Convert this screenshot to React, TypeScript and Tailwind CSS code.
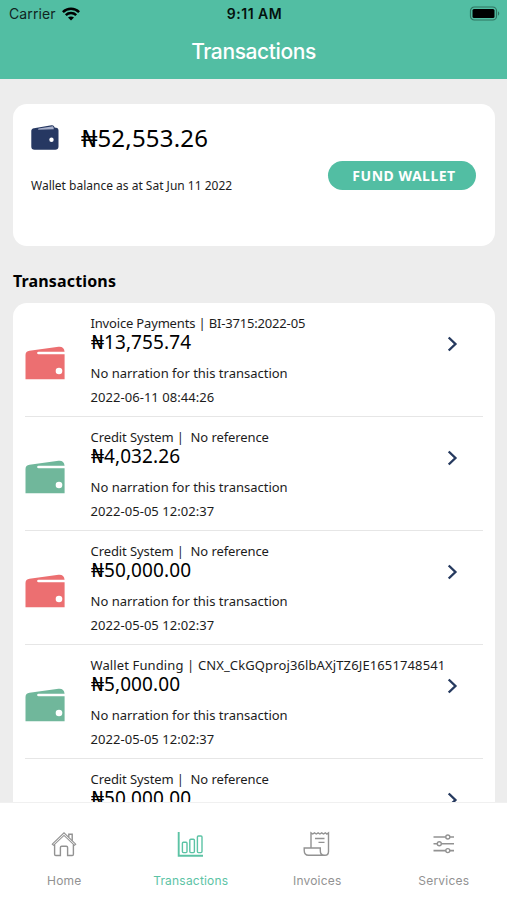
import type { ReactNode } from 'react';

type Transaction = {
  title: string;
  titleClass: string;
  amount: string;
  date: string;
  color: string;
};

const transactions: Transaction[] = [
  { title: 'Invoice Payments | BI-3715:2022-05', titleClass: 'tracking-[-0.17px]', amount: '13,755.74', date: '2022-06-11 08:44:26', color: '#ec6f71' },
  { title: 'Credit System |  No reference', titleClass: 'tracking-[-0.09px]', amount: '4,032.26', date: '2022-05-05 12:02:37', color: '#70b79b' },
  { title: 'Credit System |  No reference', titleClass: 'tracking-[-0.09px]', amount: '50,000.00', date: '2022-05-05 12:02:37', color: '#ec6f71' },
  { title: 'Wallet Funding | CNX_CkGQproj36lbAXjTZ6JE1651748541', titleClass: 'tracking-[0.12px]', amount: '5,000.00', date: '2022-05-05 12:02:37', color: '#70b79b' },
  { title: 'Credit System |  No reference', titleClass: 'tracking-[-0.09px]', amount: '50,000.00', date: '2022-05-05 12:02:37', color: '#ec6f71' },
];

function StatusBar() {
  return (
    <div className="grid h-[27px] grid-cols-3 items-center pr-[7px] pl-[9px] text-black">
      <div className="flex items-center gap-1.5">
        <span className="text-[14px] tracking-[0.1px] text-[#10251f]">Carrier</span>
        <svg width="18" height="14" viewBox="0 0 18 14" fill="none" stroke="#000" strokeWidth="2.5">
          <path d="M0.9 5.2C5.4 0.7 12.6 0.7 17.1 5.2" />
          <path d="M3.8 8.2C6.7 5.4 11.3 5.4 14.2 8.2" />
          <path d="M9 13.6L6 10.5C7.7 9 10.3 9 12 10.5Z" fill="#000" stroke="none" />
        </svg>
      </div>
      <span className="text-center text-[14px] font-semibold tracking-[0.5px] text-[#04120e]">9:11 AM</span>
      <svg className="ml-auto" width="31" height="15" viewBox="0 0 31 15">
        <rect x="1.5" y="1" width="26" height="13" rx="3.8" fill="none" stroke="#2f7461" strokeWidth="1.2" />
        <rect x="3.5" y="3" width="22" height="9" rx="1.5" fill="#000" />
        <path d="M29 5.3C30.7 6 30.7 9 29 9.7Z" fill="#2f7461" />
      </svg>
    </div>
  );
}

// The currency sign is set wider than the digits beside it
function Naira() {
  return <span className="mr-[2.5px] inline-block origin-left scale-x-[1.2] leading-none">₦</span>;
}

function BalanceIcon() {
  return (
    <svg width="28" height="26" viewBox="0 0 28 26">
      <path d="M3 3.2L20.5 0.3C22.3 0 23.4 1 23.6 2.6L25 2.8C26.6 3 27.5 4 27.5 5.5V21.5C27.5 23.6 26.3 24.8 24.2 24.8H3.6C1.4 24.8 0.3 23.6 0.3 21.5V5.8C0.3 4.4 1.3 3.5 3 3.2Z" fill="#263862" />
      <path d="M7.5 3.4L20.6 1.4C21.8 1.2 22.5 1.8 22.6 2.8L22.8 4.3L7 4.7Z" fill="#a9b1cb" />
      <circle cx="20.5" cy="14.8" r="2.2" fill="#fff" />
    </svg>
  );
}

function WalletIcon({ color }: { color: string }) {
  return (
    <svg className="shrink-0" width="40" height="34" viewBox="0 0 40 34">
      <path d="M0.5 33.3V9C0.5 6.4 2 5.2 4.5 4.8L33.5 0.7C37 0.3 39.2 1.8 39.6 5.8H13.4C11.6 5.8 11.6 8.2 13.4 8.2H39.6V33.3Z" fill={color} />
      <circle cx="34" cy="25" r="3.3" fill="#fff" />
    </svg>
  );
}

function Chevron() {
  return (
    <svg width="12" height="16" viewBox="0 0 12 16" fill="none" stroke="#263a5f" strokeWidth="2.4">
      <path d="M1.7 1.5L8.4 8L1.7 14.5" />
    </svg>
  );
}

function TransactionRow({ item }: { item: Transaction }) {
  return (
    <li className="flex h-[114px] shrink-0 border-b border-[#e6e6e6]">
      <div className="w-[65.5px] shrink-0 pt-[43px]">
        <WalletIcon color={item.color} />
      </div>
      <div className="w-[356.5px] shrink-0 pt-[11px] text-[13px] leading-[18px] whitespace-pre text-[#1c1c1c]">
        <p className={item.titleClass}>{item.title}</p>
        <p className="h-5 text-[19px] leading-5 tracking-[0.1px] text-black"><Naira />{item.amount}</p>
        <p className="mt-3">No narration for this transaction</p>
        <p className="mt-1.5 tracking-[0.05px]">{item.date}</p>
      </div>
      <div className="pt-[33px]">
        <Chevron />
      </div>
    </li>
  );
}

function Tab({ label, active, children }: { label: string; active?: boolean; children: ReactNode }) {
  return (
    <div className={`flex flex-col items-center pt-[27px] ${active ? 'text-[#5cc3a5]' : 'text-[#929292]'}`}>
      <svg width="28" height="28" viewBox="0 0 28 28" fill="none" stroke="currentColor" strokeWidth="1.4">
        {children}
      </svg>
      <span className="mt-[15px] text-[12px] leading-4 tracking-[0.2px]">{label}</span>
    </div>
  );
}

function TabBar() {
  return (
    <nav className="grid h-[98px] shrink-0 grid-cols-4 border-t border-[#f0f0f0] bg-white pl-px font-['Inter',sans-serif]">
      <Tab label="Home">
        <path d="M2.3 14.2L14 2.8L25.7 14.2L24.5 15.3L14 5.4L3.5 15.3Z" strokeWidth="1.1" />
        <path d="M4.6 14.6V24.3C4.6 25 5.1 25.5 5.8 25.5H10.4V17.6C10.4 16.8 10.9 16.3 11.7 16.3H16.3C17.1 16.3 17.6 16.8 17.6 17.6V25.5H22.2C22.9 25.5 23.4 25 23.4 24.3V14.6" />
        <path d="M18.8 7V4.2H22.2V10.8" />
      </Tab>
      <Tab label="Transactions" active>
        <path d="M1.7 2V25.8H26" strokeWidth="1.9" />
        <rect x="5.4" y="12.2" width="4.6" height="10.4" rx="1" />
        <rect x="12.8" y="9.3" width="4.6" height="13.3" rx="1" />
        <rect x="20.4" y="6" width="4.6" height="16.6" rx="1" />
      </Tab>
      <Tab label="Invoices">
        <path d="M8 17.5V2.8L9.7 4L11.5 2.8L13.3 4L15.1 2.8L16.9 4L18.7 2.8L20.5 4L22.3 2.8L23.9 4L25.5 2.8V21.5C25.5 24 24.3 25.3 21.9 25.3H5.5C2.7 25.3 1.2 23.5 1.2 20.2V18H17.3V20.8C17.3 23.8 18.7 25.3 21.3 25.3" />
        <path d="M12 8.5H21.5M15.5 12.4H21.5" />
      </Tab>
      <Tab label="Services">
        <path d="M3.5 7H15.8M19.8 7H24M3.5 13.8H7.3M11.3 13.8H24M3.5 20.6H15.8M19.8 20.6H24" strokeWidth="1.6" />
        <circle cx="17.8" cy="7" r="2" />
        <circle cx="9.3" cy="13.8" r="2" />
        <circle cx="17.8" cy="20.6" r="2" />
      </Tab>
    </nav>
  );
}

export default function App() {
  return (
    <div className="flex h-[900px] w-[507px] flex-col overflow-hidden bg-[#ededed] font-['Noto_Sans',sans-serif]">
      <header className="h-[79px] shrink-0 bg-[#52bea3] font-['Inter',sans-serif]">
        <StatusBar />
        <h1 className="mt-[9px] text-center text-[21px] leading-8 font-medium tracking-[-0.4px] text-white">Transactions</h1>
      </header>

      <main className="flex min-h-0 flex-1 flex-col px-[13px]">
        <section className="mt-[25px] flex h-[142px] w-[482px] shrink-0 justify-between rounded-[14px] bg-white pr-[19px] pl-[18px]">
          <div className="pt-[18px]">
            <div className="flex items-center gap-[22px]">
              <BalanceIcon />
              <span className="text-[24px] leading-8 tracking-[0.2px]"><Naira />52,553.26</span>
            </div>
            <p className="mt-6 text-[12px] leading-4 whitespace-nowrap text-[#1c1c1c]">Wallet balance as at Sat Jun 11 2022</p>
          </div>
          <button className="mt-[57px] h-[28.5px] w-[148px] rounded-full bg-[#52bea3] pl-1 text-[14px] font-bold tracking-[0.5px] text-white">
            FUND WALLET
          </button>
        </section>

        <h2 className="mt-[23px] mb-[10px] text-[16px] leading-6 font-bold tracking-[0.15px] text-black">Transactions</h2>

        <ul className="flex min-h-0 w-[482px] flex-1 flex-col overflow-hidden rounded-t-[14px] bg-white px-3">
          {transactions.map((item, index) => (
            <TransactionRow key={index} item={item} />
          ))}
        </ul>
      </main>

      <TabBar />
    </div>
  );
}
